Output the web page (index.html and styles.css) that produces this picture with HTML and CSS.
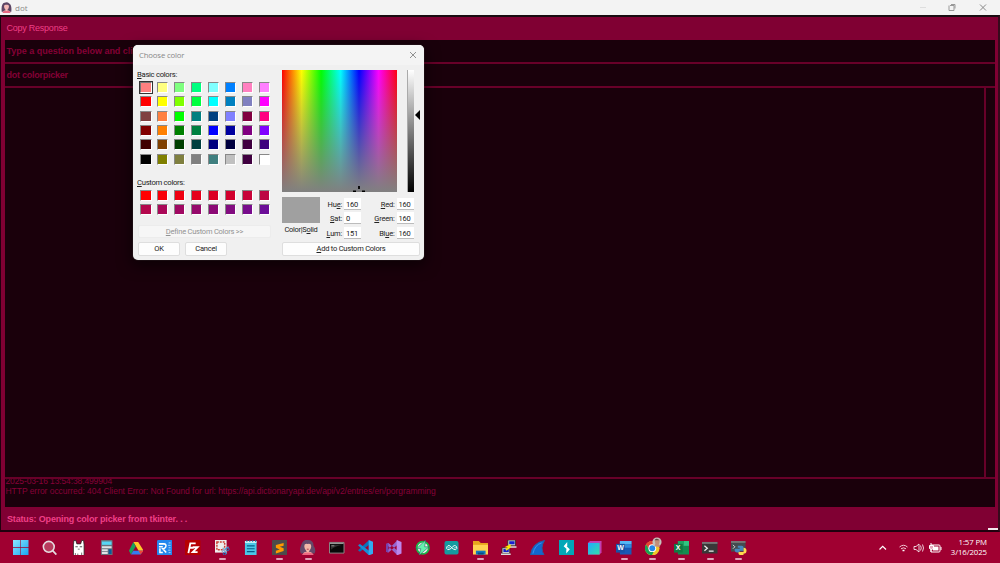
FILE: index.html
```html
<!DOCTYPE html>
<html lang="en">
<head>
<meta charset="utf-8">
<title>dot</title>
<link rel="stylesheet" href="styles.css">
</head>
<body>
<div class="screen">
  <header class="titlebar">
    <svg class="app-icon" viewBox="0 0 16 16"><path d="M1 14Q0 2 5 1Q9-1 12 2Q16 4 15 14Z" fill="#5d4664"/><path d="M3 16Q3 12 7 12L5 9Q3 3 8 4Q13 3 11 9L9 12Q13 12 13 16Z" fill="#f4b8b4"/><path d="M2 16Q4 12 7 13L9 13Q13 12 14 16Z" fill="#e76b83"/></svg>
    <span class="app-name">dot</span>
    <svg class="win-buttons" viewBox="0 0 80 15"><path d="M2 7.500h6" stroke="#dedede"/><path d="M32 5.500h4v5h-5v-5M33 4.500h4v4" fill="none" stroke="#999"/><path d="M62 4.500l6 6m0-6l-6 6" stroke="#888" fill="none"/></svg>
  </header>
  <main class="window">
    <div class="menu"><span class="t-menu">Copy Response</span></div>
    <div class="panes">
      <div class="prompt"><span class="t-prompt">Type a question below and cli</span></div>
      <div class="entry"><span class="t-entry">dot colorpicker</span></div>
      <div class="canvas"><div class="canvas-main"></div><div class="canvas-scroll"></div></div>
      <div class="log"><div class="t-stamp">2025-03-16 13:54:38.499904</div><div><span class="t-log">HTTP error occurred: 404 Client Error: Not Found for url: https://api.dictionaryapi.dev/api/v2/entries/en/porgramming</span></div></div>
    </div>
    <div class="status"><span class="t-status">Status: Opening color picker from tkinter. . .</span></div>
  </main>
  <footer class="taskbar">
    <nav class="apps">
      <i><svg viewBox="0 0 16 16"><defs><linearGradient id="win" x2="1" y2="1"><stop stop-color="#8be7ff"/><stop offset="1" stop-color="#16a5f2"/></linearGradient></defs><path d="M0 0h7.600v7.600H0zM8.200 0H16v7.600H8.200zM0 8.200h7.600V16H0zM8.200 8.200H16V16H8.200z" fill="url(#win)"/></svg></i>
      <i><svg viewBox="0 0 16 16"><circle cx="7" cy="7" r="5.600" fill="#b83b5d" stroke="#e5dce0" stroke-width="1.600"/><path d="M11 11l3.800 4" stroke="#e5dce0" stroke-width="1.800"/></svg></i>
      <i><svg viewBox="0 0 16 16"><path d="M2.500 16V5L3 .5 5 .5 6 4h4l1-3.500h2L13.500 5v11z" fill="#fff" stroke="#222" stroke-width=".8"/><path d="M4.500 6.500h2.500v1H4.500zM9 6.500h2.500v1H9zM7 9h2v.8H7z" fill="#555"/><path d="M4.500 13.500v2M7 14v2M11 13v2.500" stroke="#333" stroke-width=".7"/></svg></i>
      <i><svg viewBox="0 0 16 16"><rect x="2" width="12" height="16" rx="1" fill="#69717b"/><path d="M3 1.500h10V5H3z" fill="#57d5f5"/><path d="M3 6.500h10v2H3zM3 9.500h6v2H3zM3 12.500h6v2H3z" fill="#dfe3e6"/><path d="M10 9.500h3v5h-3z" fill="#075b9b"/></svg></i>
      <i><svg viewBox="0 0 16 16"><path d="M5.500 2h5L16 11h-5z" fill="#ffc928"/><path d="M5.500 2L8 6.500 3 15 1 11z" fill="#15a45b"/><path d="M5.500 11H16l-3 4H3z" fill="#347df0"/><path d="M11 11h5l-3 4z" fill="#ef4639"/></svg></i>
      <i><svg viewBox="0 0 16 16"><rect width="16" height="16" rx="1.500" fill="#2487ed"/><path d="M2 4h5q3 0 2 3-1 2-3 2l3.500 4M2 7h4M3 8.500V13h3" fill="none" stroke="#fff" stroke-width="1.600"/><path d="M12 3h2M11.500 5.500h2.500M12 8h2M11.500 10.500h2.500M12 13h2" stroke="#c0ddfc" stroke-width=".9"/></svg></i>
      <i><svg viewBox="0 0 16 16"><rect width="16" height="16" rx="1" fill="#b60000"/><path d="M3.500 13.500L5.500 3.500H11M5 8h4M8 7.500h5l-5 5h5" fill="none" stroke="#fff" stroke-width="1.900"/></svg></i>
      <i class="run"><svg viewBox="0 0 16 16"><path d="M1 0h12v13H1z" fill="#eee"/><path d="M3 2h8v8H3z" fill="none" stroke="#cc3f33" stroke-width="1.500" stroke-dasharray="2 1"/><path d="M8 12l7-5M9 8l4 6" stroke="#8fb0cb" stroke-width="1.400"/><circle cx="14" cy="9.500" r="1.600" fill="none" stroke="#1686d1"/><circle cx="11" cy="14" r="1.500" fill="none" stroke="#1686d1"/></svg></i>
      <i><svg viewBox="0 0 16 16"><path d="M2 1h12v15H2z" fill="#4bc8e7"/><path d="M2 1h12v2H2z" fill="#d1f4fa"/><path d="M4 0v2M7 0v2M10 0v2M13 0v2" stroke="#167aa0"/><path d="M4 6h8M4 9h8M4 12h8" stroke="#075c8b" stroke-width="1.200"/></svg></i>
      <i class="run"><svg viewBox="0 0 16 16"><rect width="16" height="16" rx="1" fill="#4c4b4a"/><path d="M12 3v3L8 7l4 1.500v2.800L4 14v-3l4-1.300L4 8V5.200z" fill="#ff9800"/></svg></i>
      <i class="run"><svg viewBox="0 0 16 16"><path d="M1 14Q-1 10 1 6Q3-1 8 0Q14 0 14 6Q17 10 15 14Z" fill="#65496a"/><path d="M3 16Q3 12 7 12L5 9Q3 3 8 4Q13 3 11 9L9 12Q13 12 13 16Z" fill="#f4b8a8"/><path d="M1.500 16Q4 12 7 13L9 13Q13 12 14.500 16Z" fill="#ed6680"/><path d="M7 9.500h2" stroke="#b43b4c"/></svg></i>
      <i><svg viewBox="0 0 16 16"><path d="M.5 2.500h15v11H.5z" fill="#080808" stroke="#8b8888"/><path d="M1 3h14v1H1z" fill="#aaa"/><path d="M2.500 6h3" stroke="#ccc"/><path d="M2 10Q7 6 14 5H2z" fill="#555" opacity=".5"/></svg></i>
      <i><svg viewBox="0 0 16 16"><path d="M0 10.500L11.500 0v5L2 12z" fill="#0872b9"/><path d="M0 5.500L2 4l9.500 7v5z" fill="#158dd5"/><path d="M11 0l5 2v12l-5 2z" fill="#32abf0"/></svg></i>
      <i><svg viewBox="0 0 16 16"><path d="M0 4l2.500-1L12 11v5zM0 12l2.500 1L12 5V0z" fill="#9565cf"/><path d="M0 4v8l2.500 1V3z" fill="#7542ab"/><path d="M11 0l5 2v12l-5 2z" fill="#bc86ed"/></svg></i>
      <i><svg viewBox="0 0 16 16"><circle cx="8" cy="8" r="6.300" fill="#f2eef2" stroke="#1ab74a" stroke-width="2"/><path d="M11 0L1.500 9H6l-2 7L14.500 7H10z" fill="#65f2af" stroke="#245a5a" stroke-width=".6"/></svg></i>
      <i><svg viewBox="0 0 16 16"><rect x=".5" y="1" width="14.500" height="14" rx="2" fill="#159ba0"/><path d="M8 8Q5 4 3 7Q2 9 4 10Q6 10 8 8Q11 4 13 7Q14 9 12 10Q10 10 8 8" fill="none" stroke="#fff"/><path d="M4 8h2M10.500 8h2" stroke="#fff" stroke-width=".6"/></svg></i>
      <i class="run"><svg viewBox="0 0 16 16"><path d="M0 1h6l2 2h8v11H0z" fill="#e8a51d"/><path d="M0 5h16v10H0z" fill="#ffd252"/><path d="M3 11h10v4H3z" fill="#1478bc"/><path d="M5 13h6v2H5z" fill="#064e86"/></svg></i>
      <i><svg viewBox="0 0 16 16"><path d="M7 0h8v6H7zM1 8h8v6H1z" fill="#ccc" stroke="#222" stroke-width=".8"/><path d="M8.500 1.200h5.500V4.500H8.500zM2.500 9.200H8V12.500H2.500z" fill="#1720d1"/><path d="M8 6.500h8v1.500H8zM0 14h10v1.500H0z" fill="#ddd"/><path d="M10 5L6 7l3 .5-4 3" fill="none" stroke="#ffed00" stroke-width="1.500"/></svg></i>
      <i><svg viewBox="0 0 16 16"><path d="M.5 15.500Q2 3 15 .5Q10 8 14.500 15.500Z" fill="#1267cf" stroke="#285ca1"/><path d="M3 14Q5 5 12 3" stroke="#3a91ed" fill="none"/></svg></i>
      <i><svg viewBox="0 0 16 16"><path d="M0 0h16v16H0z" fill="#02a7b7"/><path d="M8.500 2v4.500H4.800zM7.500 14V9.500h3.700zM4.800 6.500h3L11.200 9.500h-3z" fill="#fff"/></svg></i>
      <i><svg viewBox="0 0 16 16"><defs><linearGradient id="cube" x2="1" y2="1"><stop stop-color="#22aaff"/><stop offset="1" stop-color="#31dfa6"/></linearGradient></defs><path d="M1 3l2-2h12v12l-2 2H1z" fill="#c33eb2"/><path d="M1 3h12v12H1z" fill="url(#cube)"/></svg></i>
      <i class="run"><svg viewBox="0 0 16 16"><path d="M4 1h12v14H4z" fill="#1959b5"/><path d="M4 1h12v3.500H4z" fill="#55b7f4"/><path d="M4 4.500h12V8H4z" fill="#2f89dc"/><path d="M0 4h9v9H0z" fill="#1652a6"/></svg><b>W</b></i>
      <i class="run"><svg viewBox="0 0 16 16"><circle cx="7.500" cy="8.500" r="7.500" fill="#f0c62a"/><path d="M1 4.700Q4 0 9 1.200L14 5H8L4 10z" fill="#e44535"/><path d="M1 4.700L5 11l4 1-2 4Q-1 14 0 7z" fill="#18a554"/><circle cx="7.500" cy="8.500" r="4" fill="#fff"/><circle cx="7.500" cy="8.500" r="3" fill="#2488e7"/></svg><svg class="avatar" viewBox="0 0 12 12"><circle cx="6" cy="6" r="5.500" fill="#c5c2bd"/><path d="M3 11L4 8Q2 2 6 2T9 7L8 9l2 1-1 2z" fill="#c28e79"/><path d="M3 4Q5 0 9 4" fill="#564b48"/></svg></i>
      <i class="run"><svg viewBox="0 0 16 16"><path d="M4 1h12v14H4z" fill="#148b50"/><path d="M10 1h6v5h-6z" fill="#32c481"/><path d="M4 1h6v5H4z" fill="#20a364"/><path d="M0 4h9v9H0z" fill="#107b42"/></svg><b>X</b></i>
      <i class="run"><svg viewBox="0 0 16 16"><rect y="2" width="16" height="12" rx=".6" fill="#383838"/><path d="M0 2h16v2H0z" fill="#777"/><path d="M2.500 6l3 2.500-3 2.500M7 11.500h5" fill="none" stroke="#eee" stroke-width="1.300"/></svg></i>
      <i class="run"><svg viewBox="0 0 16 16"><path d="M0 1h15v11H0z" fill="#454b50"/><path d="M0 1h15v2H0z" fill="#777"/><path d="M2 5l2 2-2 2" stroke="#ddd" fill="none"/><path d="M7 6h4q2 0 2 2v3H9v2H6q-3-1-2-4h5V8H7z" fill="#4689bc"/><path d="M13 8q3 0 3 3t-3 3v1q-1 1.500-4 .5-2-1-1-3h5z" fill="#ffda4e"/></svg></i>
    </nav>
    <div class="tray">
      <svg class="tray-icons" viewBox="0 0 64 16"><path d="M1.500 9.500l3.200-3.200L8 9.500" fill="none" stroke="#fff" stroke-width="1.200"/><g fill="none" stroke="#f3c7d4"><path d="M21.500 7q4-3.500 8 0M23 8.800q2.500-2 5 0"/><path d="M24.500 10.500h2" stroke="#fff" stroke-width="1.500"/><path d="M36 6.500h2L41 4v8l-3-2.500h-2zM42.500 5.500q1.500 2.500 0 5M44.500 4.500q2 3.500 0 7" stroke="#fff" stroke-width=".8"/></g><path d="M53 5h8q1 0 1 1v5q0 1-1 1h-8z" fill="none" stroke="#fff"/><path d="M55 6.500h5.500v4H55z" fill="#fff"/><path d="M63 7v3M53 3v3M51.500 5.500h4v3q-2 2-4 0zM53 9v3" stroke="#fff" fill="#e7a7bb"/></svg>
      <div class="clock"><div class="time">1:57 PM</div><div class="date">3/16/2025</div></div>
    </div>
    <div class="peek"></div>
  </footer>

  <section class="dialog">
    <div class="dialog-title"><span class="t-choose">Choose color</span><svg viewBox="0 0 8 8"><path d="M1 1l6 6M7 1L1 7" stroke="#777" stroke-width=".8"/></svg></div>
    <div class="dialog-body">
      <div class="left">
        <div class="label"><u>B</u>asic colors:</div>
        <div class="swatches basic">
          <s class="selected" style="background:#ff8080"></s><s style="background:#ffff80"></s><s style="background:#80ff80"></s><s style="background:#00ff80"></s><s style="background:#80ffff"></s><s style="background:#0080ff"></s><s style="background:#ff80c0"></s><s style="background:#ff80ff"></s>
          <s style="background:#ff0000"></s><s style="background:#ffff00"></s><s style="background:#80ff00"></s><s style="background:#00ff40"></s><s style="background:#00ffff"></s><s style="background:#0080c0"></s><s style="background:#8080c0"></s><s style="background:#ff00ff"></s>
          <s style="background:#804040"></s><s style="background:#ff8040"></s><s style="background:#00ff00"></s><s style="background:#008080"></s><s style="background:#004080"></s><s style="background:#8080ff"></s><s style="background:#800040"></s><s style="background:#ff0080"></s>
          <s style="background:#800000"></s><s style="background:#ff8000"></s><s style="background:#008000"></s><s style="background:#008040"></s><s style="background:#0000ff"></s><s style="background:#0000a0"></s><s style="background:#800080"></s><s style="background:#8000ff"></s>
          <s style="background:#400000"></s><s style="background:#804000"></s><s style="background:#004000"></s><s style="background:#004040"></s><s style="background:#000080"></s><s style="background:#000040"></s><s style="background:#400040"></s><s style="background:#400080"></s>
          <s style="background:#000000"></s><s style="background:#808000"></s><s style="background:#808040"></s><s style="background:#808080"></s><s style="background:#408080"></s><s style="background:#c0c0c0"></s><s style="background:#400040"></s><s style="background:#ffffff"></s>
        </div>
        <div class="label custom-label"><u>C</u>ustom colors:</div>
        <div class="swatches">
          <s style="background:#ff0000"></s><s style="background:#f80008"></s><s style="background:#ef0011"></s><s style="background:#e5001b"></s><s style="background:#dc0024"></s><s style="background:#d2002e"></s><s style="background:#c70439"></s><s style="background:#bd0643"></s>
          <s style="background:#b4084d"></s><s style="background:#aa0858"></s><s style="background:#a00862"></s><s style="background:#960a6c"></s><s style="background:#8c0a76"></s><s style="background:#820c80"></s><s style="background:#780c8c"></s><s style="background:#6c0e98"></s>
        </div>
        <div class="button define"><span><u>D</u>efine Custom Colors &gt;&gt;</span></div>
        <div class="pair"><div class="button ok">OK</div><div class="button cancel">Cancel</div></div>
      </div>
      <div class="right">
        <div class="pickers">
          <div class="spectrum"><svg viewBox="0 0 12 6"><path d="M0 5.500h3M9 5.500h3M6 0v3" stroke="#000" stroke-width="1.800"/></svg></div>
          <div class="luminance"></div>
          <svg class="arrow" viewBox="0 0 5 10"><path d="M0 5L5 0v10z"/></svg>
        </div>
        <div class="values">
          <div class="preview"><div class="chip"></div><div class="solid">Color|S<u>o</u>lid</div></div>
          <div class="fields hsl">
            <span>Hu<u>e</u>:</span><em>160</em><span><u>S</u>at:</span><em>0</em><span><u>L</u>um:</span><em>151</em>
          </div>
          <div class="fields rgb">
            <span><u>R</u>ed:</span><em>160</em><span><u>G</u>reen:</span><em>160</em><span>Bl<u>u</u>e:</span><em>160</em>
          </div>
        </div>
        <div class="button add"><span><u>A</u>dd to Custom Colors</span></div>
      </div>
    </div>
  </section>
</div>
</body>
</html>
```

FILE: styles.css
```css
* { box-sizing: border-box; }
body { margin: 0; overflow: hidden; }
.screen { position: relative; width: 1000px; height: 563px; display: flex; flex-direction: column; font-family: "Liberation Sans", Arial, sans-serif; }
svg { display: block; flex: none; }
span { white-space: nowrap; }

.titlebar { height: 15px; background: #f3f3f3; display: flex; align-items: center; }
.app-icon { width: 11px; height: 11px; margin-left: 1px; }
.app-name { margin-left: 3px; font: 8px "Open Sans", sans-serif; color: #8a8a8a; flex: 1; }
.win-buttons { width: 80px; height: 15px; margin-right: 2px; }

.window { height: 517px; background: #800033; border: 2px solid #20000e; border-top-color: #190c11; border-left-width: 1px; border-right: 2px solid #360a1c; padding: 0 3px 0 4px; display: flex; flex-direction: column; }
.menu { height: 23px; padding: 4px 0 0 1.5px; font-size: 9px; line-height: 14px; color: #ee3f86; }
.t-menu { letter-spacing: -.24px; }
.panes { height: 467px; display: flex; flex-direction: column; gap: 2px; background: #680029; }
.prompt, .entry, .canvas > div, .log { background: #1a000b; }
.prompt, .entry { height: 22px; line-height: 22px; padding-left: 1.5px; font-weight: bold; font-size: 9px; color: #850036; }
.t-prompt { letter-spacing: -.02px; }
.t-entry { letter-spacing: -.25px; }
.canvas { height: 389px; display: flex; gap: 2px; }
.canvas-main { flex: 1; }
.canvas-scroll { width: 9px; }
.log { flex: 1; overflow: hidden; padding-left: .5px; font-size: 8.5px; line-height: 10px; color: #870038; }
.t-log { letter-spacing: -.045px; }
.t-stamp { margin-top: -3px; letter-spacing: -.12px; }
.status { flex: 1; padding: 5px 0 0 2px; font-weight: bold; font-size: 9px; line-height: 14px; color: #ef3f87; }
.t-status { letter-spacing: -.16px; }

.taskbar { position: relative; height: 31px; background: #a00031; display: flex; justify-content: space-between; }
.apps { display: flex; padding-left: 6.500px; }
.apps i { position: relative; width: 28.72px; height: 31px; display: flex; justify-content: center; align-items: center; font-style: normal; }
.apps svg { width: 15.500px; height: 15.500px; }
.apps i.run::after { content: ""; position: absolute; bottom: 3px; left: 11px; width: 7px; height: 2px; border-radius: 1px; background: #dfa1b6; }
.apps b { position: absolute; left: 7px; top: 11px; width: 8px; text-align: center; font-size: 7px; line-height: 9px; color: #fff; }
.apps .avatar { position: absolute; width: 10px; height: 10px; left: 14px; top: 5px; }
.tray { display: flex; align-items: center; padding-right: 13px; }
.tray-icons { width: 64px; height: 16px; }
.clock { width: 45px; text-align: right; font: 7.8px/10px "Open Sans", sans-serif; color: #fff; padding-bottom: 1px; }
.time { letter-spacing: -.1px; }
.date { white-space: nowrap; letter-spacing: -.08px; }
.peek { position: absolute; right: 2px; top: -4px; width: 10px; height: 2px; background: #f3e8ec; }

.dialog { position: absolute; left: 133px; top: 45px; width: 291px; height: 215px; background: #f0f0f0; border-radius: 5px; box-shadow: 0 0 1px #777, 0 4px 14px 2px #0008; font: 7.5px/10px Roboto, sans-serif; letter-spacing: -.22px; color: #222; }
.dialog-title { height: 20px; border-radius: 5px 5px 0 0; background: #f4f4f4; display: flex; justify-content: space-between; align-items: center; padding: 0 7px 0 6px; color: #888; font: 7.800px/10px "Open Sans", sans-serif; letter-spacing: -.18px; }
.dialog-title svg { width: 8px; height: 8px; }
.dialog-body { display: flex; padding-left: 4px; }
.dialog u { text-decoration-thickness: .6px; text-underline-offset: 1px; }
.left { width: 145px; padding-top: 4px; }
.label { height: 13px; line-height: 11px; white-space: nowrap; font-size: 7.700px; letter-spacing: -.3px; }
.swatches { display: grid; grid-template-columns: repeat(8, 11.500px); grid-auto-rows: 11px; column-gap: 5.450px; row-gap: 3.350px; padding-left: 3px; }
.swatches s { border: 1px solid; border-color: #888 #fff #fff #888; }
.swatches .selected { outline: 1px solid #333; border-color: #777 #fff #fff #777; outline-offset: .5px; }
.custom-label { margin-top: 12px; }
.button { height: 14px; display: flex; align-items: center; justify-content: center; background: #fdfdfd; border: 1px solid #dedede; border-radius: 2px; }
.define { width: 133px; height: 13px; margin: 10px 0 0 1px; color: #929292; background: #f6f6f6; border-color: #ececec; letter-spacing: -.23px; }
.pair { display: flex; gap: 5px; margin: 3.500px 0 0 1px; }
.ok, .cancel { width: 42px; }
.right { width: 138px; padding-top: 5px; }
.pickers { display: flex; height: 122px; }
.spectrum { width: 115px; display: flex; justify-content: center; align-items: flex-end; padding-left: 39px; overflow: hidden; background: linear-gradient(to bottom, #80808000, #808080), linear-gradient(to right, red, yellow 17%, lime 34%, cyan 51%, blue 67%, magenta 84%, #ff0010); }
.spectrum svg { width: 12px; height: 6px; }
.luminance { width: 7px; margin-left: 10px; background: linear-gradient(#fff, #a0a0a0 37%, #000); border-left: 1px solid #aaa; }
.arrow { width: 5px; height: 10px; margin: 40px 0 0 1px; }
.values { height: 50px; display: flex; padding-top: 5px; }
.preview { width: 38px; }
.chip { height: 26px; background: #a0a0a0; }
.solid { margin-top: 2px; line-height: 9px; text-align: center; white-space: nowrap; letter-spacing: -.3px; }
.fields { display: grid; grid-auto-rows: 12px; row-gap: 2.500px; column-gap: 2px; padding-top: .5px; text-align: right; line-height: 13px; }
.hsl { grid-template-columns: 22px 17px; }
.rgb { grid-template-columns: 32px 17px; margin-left: 1.500px; }
.fields em { background: #fff; font-style: normal; text-align: left; padding-left: 2px; border-bottom: 1px solid #bcbcbc; line-height: 13px; }
.add { width: 138px; }
```
